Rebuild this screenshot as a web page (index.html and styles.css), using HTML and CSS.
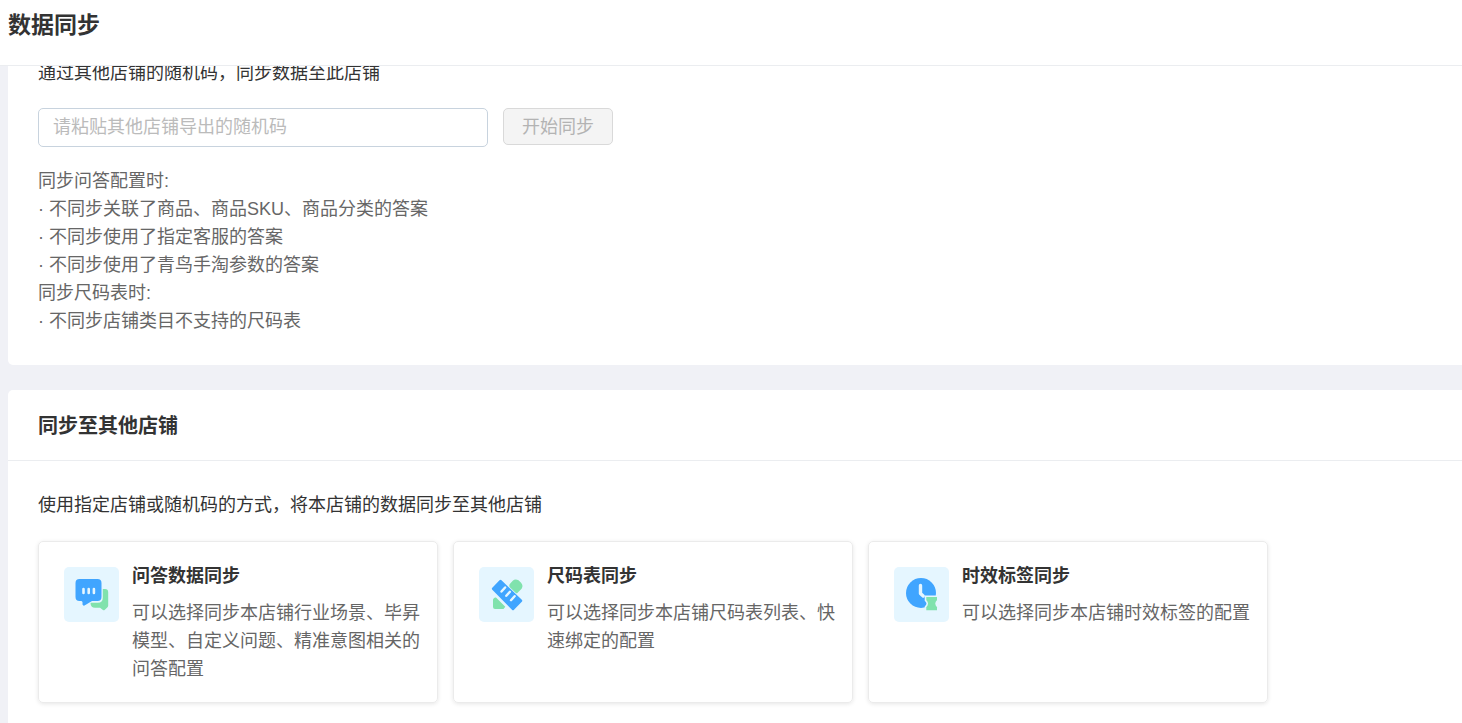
FILE: index.html
```html
<!DOCTYPE html>
<html lang="zh-CN">
<head>
<meta charset="utf-8">
<title>数据同步</title>
<link rel="stylesheet" href="styles.css">
</head>
<body>
<header class="page-header">
  <h1 class="page-title">数据同步</h1>
</header>
<main class="content">
  <section class="panel panel-import">
    <label class="lead" for="code">通过其他店铺的随机码，同步数据至此店铺</label>
    <form class="code-form">
      <input class="code-input" id="code" type="text" placeholder="请粘贴其他店铺导出的随机码">
      <button class="sync-button" type="button" disabled>开始同步</button>
    </form>
    <div class="notes">
      <p>同步问答配置时:</p>
      <p>· 不同步关联了商品、商品SKU、商品分类的答案</p>
      <p>· 不同步使用了指定客服的答案</p>
      <p>· 不同步使用了青鸟手淘参数的答案</p>
      <p>同步尺码表时:</p>
      <p>· 不同步店铺类目不支持的尺码表</p>
    </div>
  </section>
  <section class="panel">
    <div class="panel-header">
      <h2 class="panel-title">同步至其他店铺</h2>
    </div>
    <div class="panel-body">
      <p class="lead">使用指定店铺或随机码的方式，将本店铺的数据同步至其他店铺</p>
      <div class="cards">
        <article class="card">
          <svg class="card-icon" viewBox="0 0 55 55" aria-hidden="true">
            <path fill="#80e2ad" d="M38.800 22H41q3.200 0 3.200 3.200v13.300q0 1.500-1.200 2.300L40.600 43q-.8.6-1.600 0L36 40.800h-5q-4.500 0-4.500-5h7.300q5 0 5-5z"/>
            <path fill="#40a5ff" d="M15.500 12h18q4 0 4 4v14q0 4-4 4h-5.500l-7.500 4.500q-1.500.5-2-1v-2.500l-1-1h-2q-4 0-4-4v-14q0-4 4-4z"/>
            <path stroke="#e5f6ff" stroke-width="2.600" stroke-linecap="round" d="M19.500 22v4M24.700 22v4M29.900 22v4"/>
          </svg>
          <div class="card-text">
            <h3 class="card-title">问答数据同步</h3>
            <p class="card-desc">可以选择同步本店铺行业场景、毕昇模型、自定义问题、精准意图相关的问答配置</p>
          </div>
        </article>
        <article class="card">
          <svg class="card-icon" viewBox="0 0 55 55" aria-hidden="true">
            <path fill="#80e2ad" d="M30.800 17l2.700-3q2.500-2.500 6-.7l2.600 2.400q2.500 3 .5 6l-4 4q-1 1-2 0l-5.800-5.500q-1-1.500 0-3.200zM17 30.500l9.300 9.300-1.800 2.200h-8.500q-2 0-2-2v-7.500q1-2.500 3-2z"/>
            <path fill="#40a5ff" d="M20.500 13.200q1-1 2 0l20.300 19.600q1 1 0 2l-7.800 8q-1 1-2 0l-19.700-20q-1-1 0-2z"/>
            <path stroke="#e5f6ff" stroke-width="2.400" stroke-linecap="round" d="M22.500 24.500l3.600-4M27.300 28.800l3.600-4M32 33.200l3.600-4"/>
          </svg>
          <div class="card-text">
            <h3 class="card-title">尺码表同步</h3>
            <p class="card-desc">可以选择同步本店铺尺码表列表、快速绑定的配置</p>
          </div>
        </article>
        <article class="card">
          <svg class="card-icon" viewBox="0 0 55 55" aria-hidden="true">
            <circle cx="27" cy="26" r="15" fill="#40a5ff"/>
            <path fill="none" stroke="#e5f6ff" stroke-width="3.400" stroke-linecap="round" stroke-linejoin="round" d="M26.500 18.500v8l2.700 2.500"/>
            <path fill="#80e2ad" stroke="#e5f6ff" stroke-width="1.600" d="M31.500 29.300h12.300v4q-3.500 3.300 0 6.500v4.200h-12.300v-4.200q3.500-3.200 0-6.500z"/>
          </svg>
          <div class="card-text">
            <h3 class="card-title">时效标签同步</h3>
            <p class="card-desc">可以选择同步本店铺时效标签的配置</p>
          </div>
        </article>
      </div>
    </div>
  </section>
</main>
</body>
</html>
```
FILE: styles.css
```css
* {
  box-sizing: border-box;
}

body {
  display: flex;
  flex-direction: column;
  height: 100vh;
  margin: 0;
  overflow: hidden;
  background: #f0f1f6;
  color: #333;
  font-family: "Liberation Sans", "Noto Sans CJK SC", sans-serif;
  font-size: 18px;
  line-height: 28px;
}

h1, h2, h3, p {
  margin: 0;
}

.page-header {
  flex: none;
  padding: 8px 8px 23px;
  background: #fff;
  border-bottom: 1px solid #ebedf0;
}

.page-title {
  font-size: 23px;
  line-height: 34px;
}

.content {
  flex: 1;
  min-height: 0;
  padding-left: 8px;
  overflow: hidden;
}

.panel {
  background: #fff;
  border-radius: 5px 0 0 5px;
}

.panel-import {
  margin: -7px 0 25px;
  padding: 0 30px 30px;
}

.lead {
  display: block;
}

.code-form {
  display: flex;
  align-items: flex-start;
  gap: 15px;
  margin: 21px 0 20px;
}

.code-input {
  width: 450px;
  height: 39px;
  padding: 0 14px;
  border: 1px solid #c8d3de;
  border-radius: 5px;
  background: #fff;
  color: #333;
  font: inherit;
}

.code-input::placeholder {
  color: #bbb;
}

.sync-button {
  width: 110px;
  height: 37px;
  padding: 0;
  border: 1px solid #d9d9d9;
  border-radius: 5px;
  background: #f4f4f4;
  color: #b3b3b3;
  font: inherit;
}

.notes {
  color: #666;
}

.panel-header {
  padding: 21px 30px 19px;
  border-bottom: 1px solid #ebedf0;
}

.panel-title {
  font-size: 20px;
  line-height: 30px;
}

.panel-body {
  padding: 30px;
}

.cards {
  display: grid;
  grid-template-columns: repeat(auto-fill, 400px);
  gap: 15px;
  margin-top: 22px;
}

.card {
  display: flex;
  gap: 13px;
  min-height: 162px;
  padding: 20px 15px 19px 25px;
  border: 1px solid #ebebeb;
  border-radius: 5px;
  box-shadow: 0 1px 4px rgba(0, 0, 0, 0.1);
}

.card-icon {
  flex: none;
  width: 55px;
  height: 55px;
  margin-top: 5px;
  border-radius: 5px;
  background: #e5f6ff;
}

.card-title {
  margin-bottom: 9px;
  font-size: 18px;
  line-height: 28px;
}

.card-desc {
  color: #666;
}
```
